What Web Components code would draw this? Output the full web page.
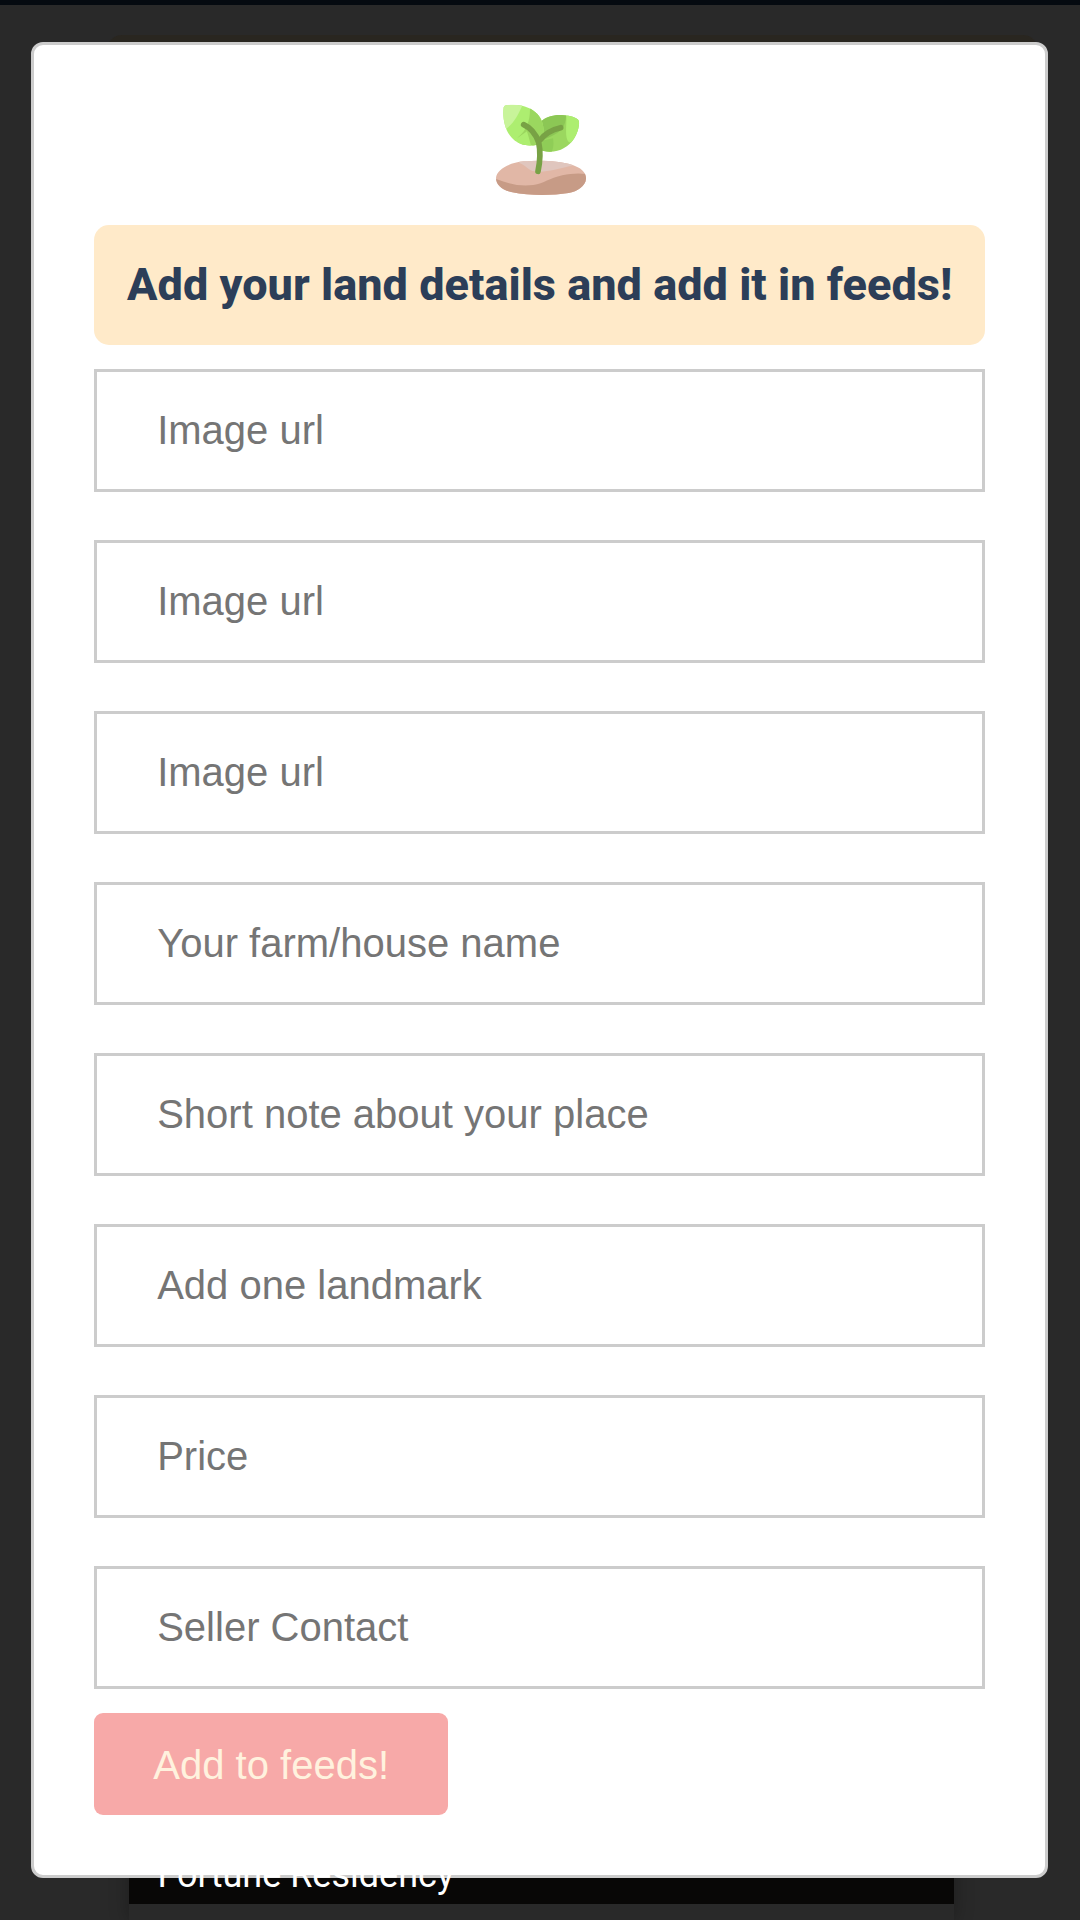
<!DOCTYPE html>
<html lang="en">
<head>
<meta charset="utf-8">
<title>Add land details</title>
<style>
html, body { margin: 0; height: 100%; overflow: hidden; background: #292929; }
</style>
</head>
<body>
<land-page>
  <land-modal>
    <sprout-icon></sprout-icon>
    <modal-banner>Add your land details and add it in feeds!</modal-banner>
    <land-form>
      <text-field label="Image url"></text-field>
      <text-field label="Image url"></text-field>
      <text-field label="Image url"></text-field>
      <text-field label="Your farm/house name"></text-field>
      <text-field label="Short note about your place"></text-field>
      <text-field label="Add one landmark"></text-field>
      <text-field label="Price"></text-field>
      <text-field label="Seller Contact"></text-field>
    </land-form>
    <submit-button>Add to feeds!</submit-button>
  </land-modal>
  <feed-caption slot="caption">Fortune Residency</feed-caption>
</land-page>
<script>
const define = (name, html) => customElements.define(name, class extends HTMLElement {
  constructor() {
    super();
    this.attachShadow({ mode: "open" }).innerHTML = html;
  }
});

define("feed-card", `
<style>
:host { display: block; width: 825px; height: 100%; box-sizing: border-box; box-shadow: 0 0 18px rgba(0,0,0,.3); background: #292929; }
.photo { height: 68px; background: #080706; }
</style>
<div class="photo"></div>`);

define("feed-caption", `
<style>
:host { display: block; color: #fff; font: 450 36px/48px Roboto, sans-serif; white-space: nowrap; }
</style>
<slot></slot>`);

define("land-page", `
<style>
:host { display: grid; grid-template: 1920px / 1080px; width: 1080px; height: 1920px; overflow: hidden; }
.back, .front, .caption { grid-area: 1 / 1; min-width: 0; }
.back { display: flex; flex-direction: column; align-items: flex-start; background: #292929; }
.nav { align-self: stretch; height: 5px; flex: none; background: #050a10; }
.banner { width: 931px; height: 60px; margin: 30px 0 0 107px; flex: none; border-radius: 15px; background: #292620; }
.spacer { flex: 1; }
.feed { height: 84px; margin-left: 129px; flex: none; }
.front { display: flex; align-items: flex-start; padding: 42px 0 0 31.2px; }
.caption { display: flex; align-items: flex-end; padding: 0 0 21px 157.5px; pointer-events: none; }
</style>
<div class="back">
  <div class="nav"></div><div class="banner"></div><div class="spacer"></div>
  <div class="feed"><feed-card></feed-card></div>
</div>
<div class="front"><slot></slot></div>
<div class="caption"><slot name="caption"></slot></div>`);

define("land-modal", `
<style>
:host { display: flex; flex-direction: column; align-items: flex-start; box-sizing: border-box; width: 1017px; height: 1836px; padding: 57px 60px 60px; border: 3px solid #ccc; border-radius: 12px; background: #fff; }
</style>
<slot></slot>`);

define("sprout-icon", `
<style>
:host { display: block; align-self: center; width: 96px; height: 96px; margin-bottom: 27px; }
svg { display: block; width: 96px; height: 96px; }
</style>
<svg viewBox="36 36 288 288">
  <defs>
    <clipPath id="l"><path d="M71 52C73 46 78 45 85 45C128 41 158 56 173 73C190 91 197 128 186 158C152 175 113 165 94 142C74 119 67 82 71 52Z"/></clipPath>
    <clipPath id="r"><path d="M180 98C196 79 222 74 245 75C264 76 283 80 292 87C297 91 298 96 297 104C294 132 276 162 252 174C230 188 198 189 174 178Z"/></clipPath>
    <clipPath id="s"><path d="M48 264C50 240 82 219 132 214C176 210 235 211 276 224C302 233 319 246 318 266C317 288 292 304 266 309C216 317 146 317 97 307C66 300 48 285 48 264Z"/></clipPath>
  </defs>
  <g clip-path="url(#s)">
    <path fill="#e1b7a6" d="M40 200h290v130H40z"/>
    <path fill="#e0c6be" d="M118 219C139 226 144 242 164 244C197 248 228 239 280 226L240 205H120Z"/>
    <path fill="#c79b86" d="M40 264C87 282 119 290 160 285C193 281 207 264 247 256C276 250 300 248 330 254V330H40Z"/>
  </g>
  <g clip-path="url(#r)">
    <path fill="#9bd75f" d="M160 65h150v140H160z"/>
    <path fill="#8cc755" d="M160 60H258C260 86 255 104 246 118C228 134 206 144 180 152H160Z"/>
    <path fill="#8fcd57" d="M183 153L219 145C222 162 220 179 212 192H160Z"/>
    <path fill="#adee70" d="M258 65H310V170L266 156C252 140 262 108 258 65Z"/>
  </g>
  <g clip-path="url(#l)">
    <path fill="#adee70" d="M60 35h145v145H60z"/>
    <path fill="#9bd75f" d="M149 40H210V180H135C127 163 111 150 114 142C144 118 153 84 149 40Z"/>
    <path fill="#adee70" d="M113 143L141 124L157 180H110Z"/>
    <path fill="#9bd75f" d="M142 126C151 140 158 154 158 174H200V120Z"/>
    <path fill="#c8f49a" d="M60 35H132C117 70 105 96 78 117L60 110Z"/>
  </g>
  <path d="M131 104C151 113 168 134 176 157C182 184 180 215 174 244M178 153C191 134 214 119 242 113" fill="none" stroke="#78a245" stroke-width="17" stroke-linecap="round" stroke-linejoin="round"/>
</svg>`);

define("modal-banner", `
<style>
:host { display: flex; align-items: center; justify-content: center; align-self: stretch; height: 120px; flex: none; box-sizing: border-box; border-radius: 15px; background: #ffeac9; color: #2c3e58; font: 800 45px/60px Roboto, sans-serif; letter-spacing: .04px; white-space: nowrap; }
</style>
<slot></slot>`);

define("land-form", `
<style>
:host { display: flex; flex-direction: column; align-self: stretch; gap: 48px; margin: 24px 0; }
</style>
<slot></slot>`);

customElements.define("text-field", class extends HTMLElement {
  constructor() {
    super();
    this.attachShadow({ mode: "open" }).innerHTML = `
<style>
:host { display: block; height: 123px; }
input { display: block; box-sizing: border-box; width: 100%; height: 123px; margin: 0; padding: 0 60px; border: 3px solid #ccc; border-radius: 0; outline: 0; background: #fff; font: 40px "Liberation Sans", Arial, sans-serif; }
input::placeholder { color: #757575; opacity: 1; }
</style>
<input type="text">`;
  }
  connectedCallback() {
    this.shadowRoot.querySelector("input").placeholder = this.getAttribute("label");
  }
});

define("submit-button", `
<style>
:host { display: block; }
button { display: block; width: 354px; height: 102px; margin: 0; padding: 2px 0 0; border: 0; border-radius: 9px; background: #f7a9a8; color: #fff2de; font: 40px "Liberation Sans", Arial, sans-serif; }
</style>
<button type="button"><slot></slot></button>`);
</script>
</body>
</html>
